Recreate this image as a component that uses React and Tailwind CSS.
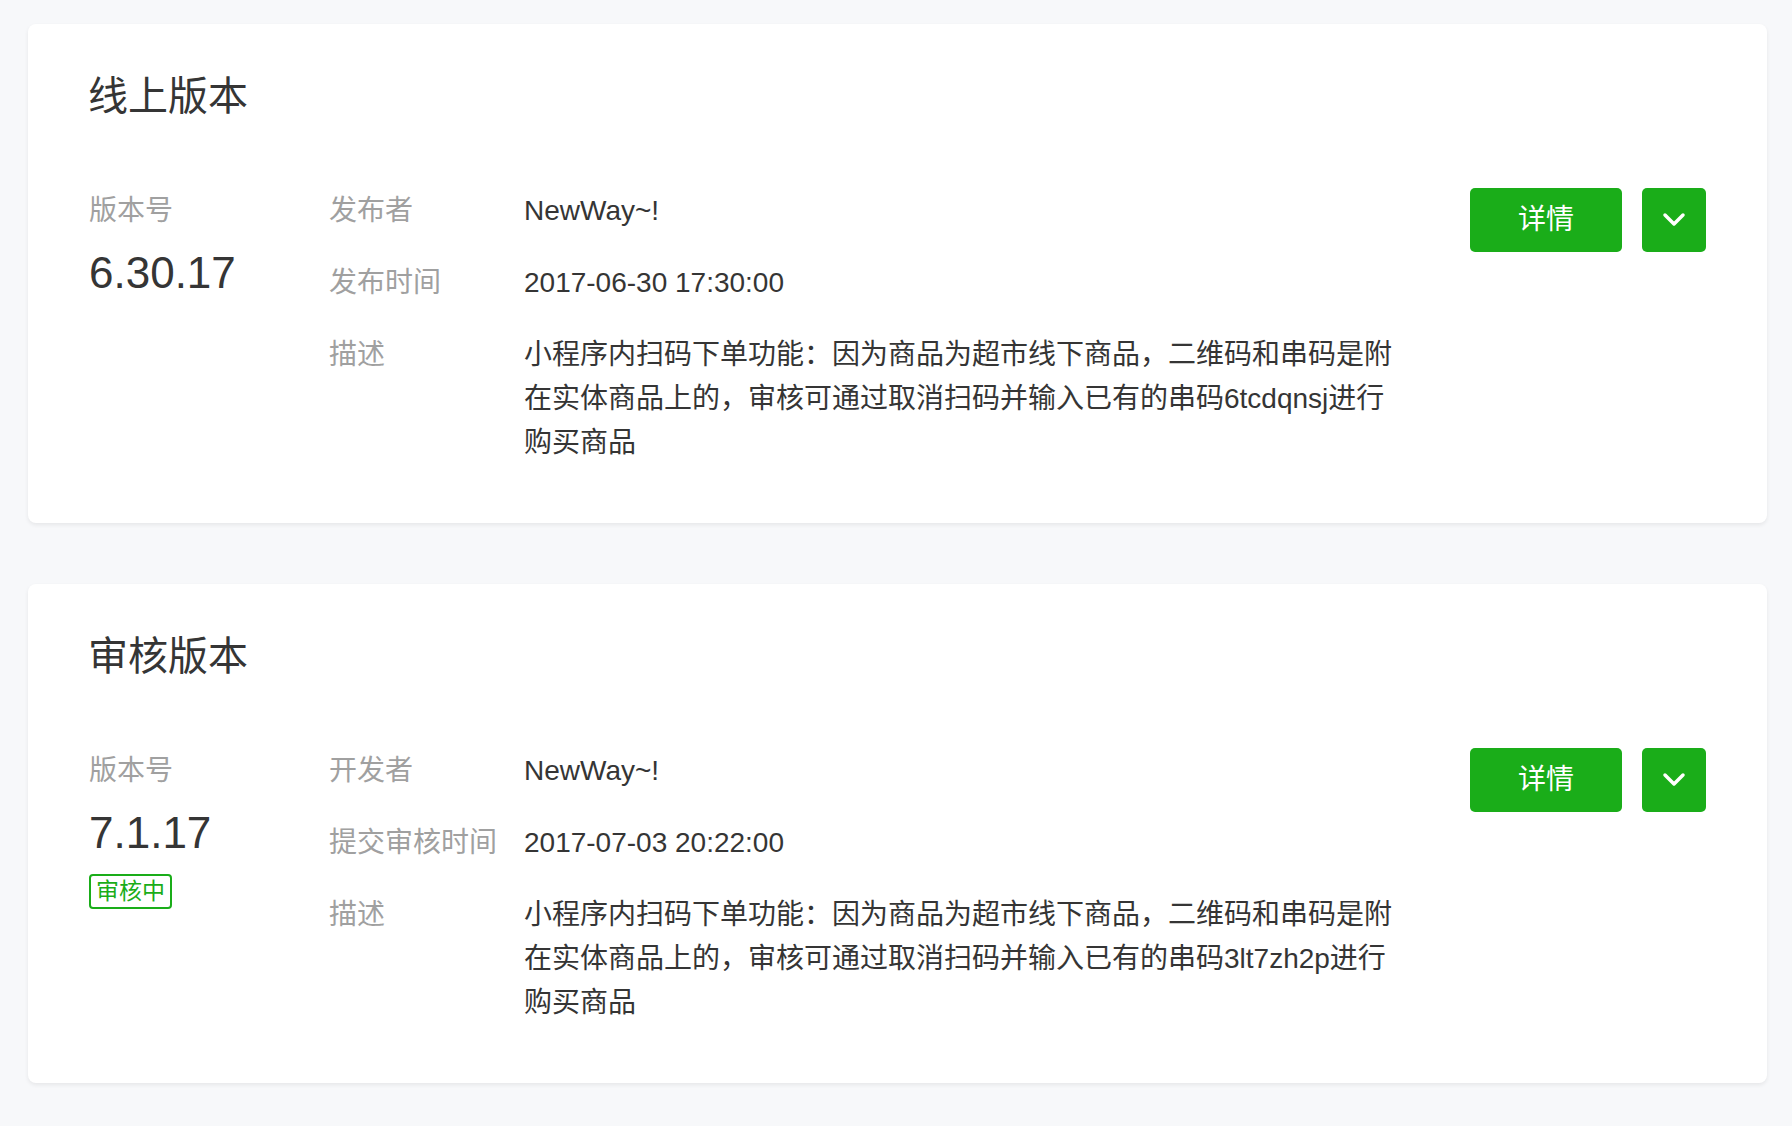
import React from "react";

const versions = [
  {
    title: "线上版本",
    version: "6.30.17",
    rows: [
      { label: "发布者", value: "NewWay~!" },
      { label: "发布时间", value: "2017-06-30 17:30:00" },
      {
        label: "描述",
        value:
          "小程序内扫码下单功能：因为商品为超市线下商品，二维码和串码是附在实体商品上的，审核可通过取消扫码并输入已有的串码6tcdqnsj进行购买商品",
      },
    ],
  },
  {
    title: "审核版本",
    version: "7.1.17",
    status: "审核中",
    rows: [
      { label: "开发者", value: "NewWay~!" },
      { label: "提交审核时间", value: "2017-07-03 20:22:00" },
      {
        label: "描述",
        value:
          "小程序内扫码下单功能：因为商品为超市线下商品，二维码和串码是附在实体商品上的，审核可通过取消扫码并输入已有的串码3lt7zh2p进行购买商品",
      },
    ],
  },
];

const ChevronDown = () => (
  <svg width="24" height="16" viewBox="0 0 24 16" fill="none">
    <polyline
      points="3,3 12,12 21,3"
      stroke="white"
      strokeWidth="3.5"
      strokeLinecap="round"
      strokeLinejoin="round"
    />
  </svg>
);

const VersionCard = ({ item }) => (
  <div className="ml-[28px] mr-[25px] bg-white rounded-[8px] shadow-[0_2px_4px_rgba(0,0,0,0.07)] pt-[52px] pb-[58px] px-[61px]">
    <h2 className="text-[40px] leading-[40px] text-[#353535] font-normal -ml-[1px]">{item.title}</h2>
    <div className="flex mt-[73px]">
      {/* 版本号 */}
      <div className="w-[240px] shrink-0">
        <div className="text-[28px] leading-[44px] text-[#a0a0a0]">版本号</div>
        <div className="mt-[14px] text-[44px] leading-[52px] text-[#353535]">{item.version}</div>
        {item.status && (
          <div className="mt-[15px] inline-block border-2 border-[#1aad19] rounded-[4px] px-[5px] text-[23px] leading-[31px] text-[#1aad19]">
            {item.status}
          </div>
        )}
      </div>

      {/* 详细信息 */}
      <div className="flex-1 flex flex-col gap-[28px]">
        {item.rows.map((row) => (
          <div key={row.label} className="flex">
            <div className="w-[195px] shrink-0 text-[28px] leading-[44px] text-[#a0a0a0]">{row.label}</div>
            <div className="max-w-[880px] text-[28px] leading-[44px] text-[#353535]">{row.value}</div>
          </div>
        ))}
      </div>

      {/* 操作 */}
      <div className="flex gap-[20px] shrink-0 self-start -mt-[1px]">
        <button className="w-[152px] h-[64px] rounded-[5px] bg-[#1aad19] text-white text-[28px] leading-none">
          详情
        </button>
        <button className="w-[64px] h-[64px] rounded-[5px] bg-[#1aad19] flex items-center justify-center">
          <ChevronDown />
        </button>
      </div>
    </div>
  </div>
);

const App = () => {
  return (
    <div
      className="min-h-screen bg-[#f7f8fa] pt-[24px] pb-[42px] flex flex-col gap-[61px]"
      style={{ fontFamily: '"Liberation Sans", "Noto Sans CJK SC", sans-serif' }}
    >
      {versions.map((item) => (
        <VersionCard key={item.title} item={item} />
      ))}
    </div>
  );
};

export default App;
